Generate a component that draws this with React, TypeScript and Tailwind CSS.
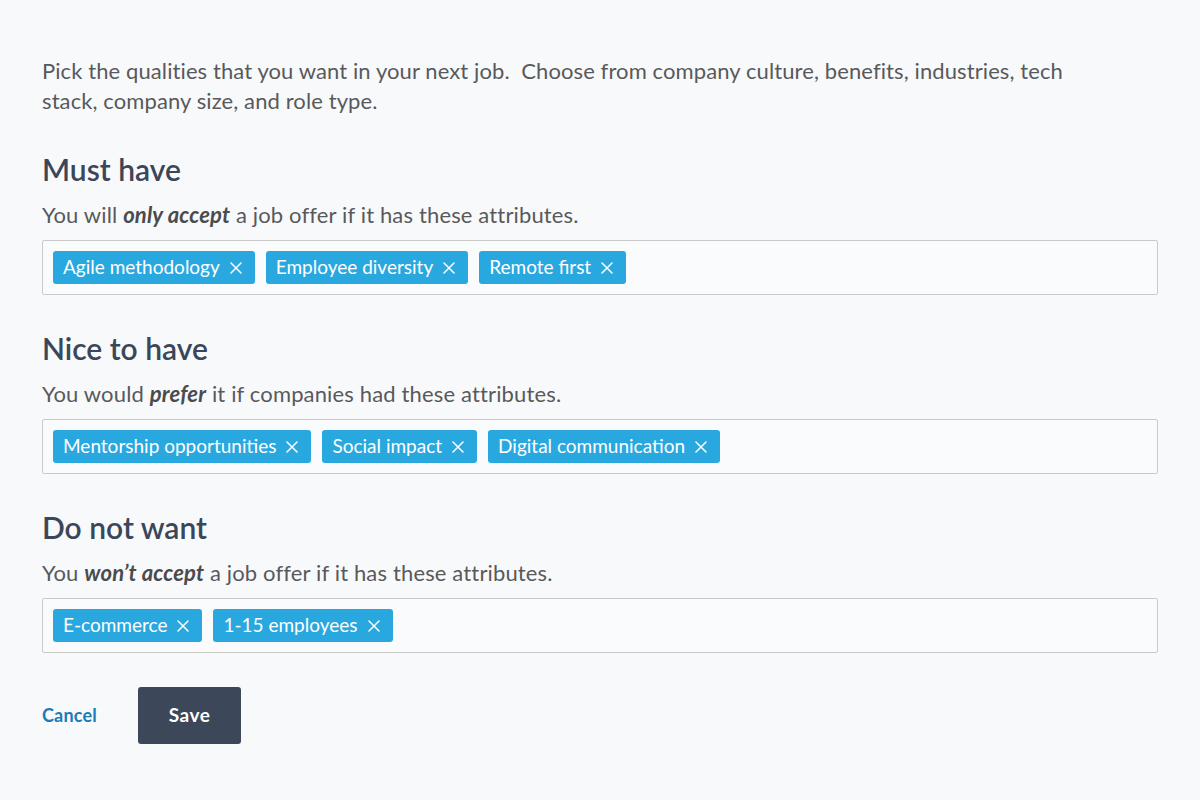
import React from "react";

const X = () => (
  <svg width="12" height="12" viewBox="0 0 12 12" className="shrink-0">
    <path d="M1 1L11 11M11 1L1 11" stroke="white" strokeWidth="1.5" strokeLinecap="round" />
  </svg>
);

const Tag = ({ label }: { label: string }) => (
  <span className="flex items-center h-[33px] pl-[10px] pr-[13px] gap-[10px] bg-[#29a8e0] rounded-[3px] text-white text-[19px]">
    <span>{label}</span>
    <X />
  </span>
);

const Section = ({
  title,
  pre,
  em,
  post,
  tags,
}: {
  title: string;
  pre: string;
  em: string;
  post: string;
  tags: string[];
}) => (
  <div className="mt-[35px]">
    <h2 className="text-[30px] leading-[36px] font-semibold text-[#3b4659]">{title}</h2>
    <p className="mt-[13px] text-[22px] leading-[30px] tracking-[0.15px] text-[#58595b]">
      {pre}
      <b className="italic font-bold text-[#4a4b4d]">{em}</b>
      {post}
    </p>
    <div className="mt-[10px] h-[55px] border-[1.5px] border-[#c9c9c9] rounded-[2px] bg-[#fafbfc] flex items-center gap-[11px] px-[10px]">
      {tags.map((t) => (
        <Tag key={t} label={t} />
      ))}
    </div>
  </div>
);

export default function App() {
  return (
    <div
      className="min-h-[800px] bg-[#f8f9fb] px-[42px] pt-[56px]"
      style={{ fontFamily: "Lato, 'Noto Sans', sans-serif" }}
    >
      <div className="w-[1116px]">
        <p className="w-[1070px] text-[22px] leading-[30px] tracking-[0.1px] text-[#58595b]">
          Pick the qualities that you want in your next job.&nbsp; Choose from company culture, benefits, industries, tech
          stack, company size, and role type.
        </p>
        <Section
          title="Must have"
          pre="You will "
          em="only accept"
          post=" a job offer if it has these attributes."
          tags={["Agile methodology", "Employee diversity", "Remote first"]}
        />
        <Section
          title="Nice to have"
          pre="You would "
          em="prefer"
          post=" it if companies had these attributes."
          tags={["Mentorship opportunities", "Social impact", "Digital communication"]}
        />
        <Section
          title="Do not want"
          pre="You "
          em="won’t accept"
          post=" a job offer if it has these attributes."
          tags={["E-commerce", "1-15 employees"]}
        />
        <div className="mt-[34px] flex items-center gap-[41px]">
          <button className="text-[18px] font-bold text-[#1b7cb6] tracking-[0.2px]">Cancel</button>
          <button className="w-[103px] h-[57px] rounded-[3px] bg-[#3d475a] text-white text-[19px] font-bold tracking-[0.5px]">
            Save
          </button>
        </div>
      </div>
    </div>
  );
}
